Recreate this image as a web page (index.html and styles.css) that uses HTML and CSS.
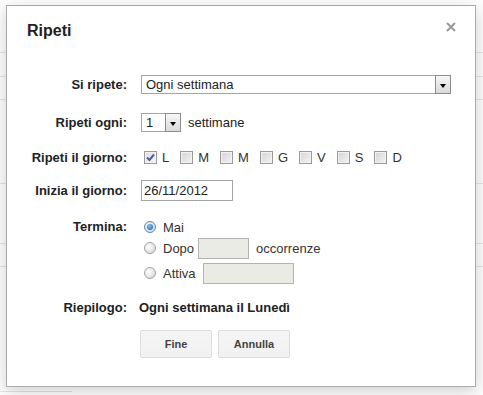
FILE: index.html
```html
<!DOCTYPE html>
<html lang="it">
<head>
  <meta charset="UTF-8">
  <meta name="viewport" content="width=device-width, initial-scale=1.0">
  <title>Ripeti</title>
  <link rel="stylesheet" href="styles.css">
</head>
<body>
  <!-- calendar grid showing behind the dialog -->
  <div class="backdrop">
    <div class="bg-row h52"></div>
    <div class="bg-row h25"></div>
    <div class="bg-row h23"></div>
    <div class="bg-row h84"></div>
    <div class="bg-row h60"></div>
    <div class="bg-row h23"></div>
    <div class="bg-row h125 short"></div>
  </div>

  <div class="dialog">
    <div class="dialog-header">
      <h2>Ripeti</h2>
      <span class="close">
        <svg width="10" height="10" viewBox="0 0 10 10">
          <path d="M1 1 L9 9 M9 1 L1 9" stroke="#999" stroke-width="2" fill="none"/>
        </svg>
      </span>
    </div>

    <form class="repeat-form">
      <div class="row r1">
        <label class="row-label">Si ripete:</label>
        <div class="fake-select wide">
          <span class="sel-text">Ogni settimana</span>
          <span class="sel-btn"><i></i></span>
        </div>
      </div>

      <div class="row r2">
        <label class="row-label">Ripeti ogni:</label>
        <div class="fake-select small">
          <span class="sel-text">1</span>
          <span class="sel-btn"><i></i></span>
        </div>
        <span class="after">settimane</span>
      </div>

      <div class="row r3">
        <label class="row-label">Ripeti il giorno:</label>
        <div class="days">
          <span class="day"><span class="box checked"><svg width="11" height="11" viewBox="0 0 11 11"><path d="M2 5.5 L4.5 8 L9 2.5" stroke="#4b5da6" stroke-width="2" fill="none"/></svg></span>L</span>
          <span class="day"><span class="box"></span>M</span>
          <span class="day"><span class="box"></span>M</span>
          <span class="day"><span class="box"></span>G</span>
          <span class="day"><span class="box"></span>V</span>
          <span class="day"><span class="box"></span>S</span>
          <span class="day"><span class="box"></span>D</span>
        </div>
      </div>

      <div class="row r4">
        <label class="row-label">Inizia il giorno:</label>
        <div class="text-input date">26/11/2012</div>
      </div>

      <div class="row r5">
        <label class="row-label">Termina:</label>
        <div class="ends">
          <div class="end-line first"><span class="radio on"></span>Mai</div>
          <div class="end-line"><span class="radio"></span>Dopo<span class="text-input off count"></span><span class="after">occorrenze</span></div>
          <div class="end-line"><span class="radio"></span>Attiva<span class="text-input off until"></span></div>
        </div>
      </div>

      <div class="row r6">
        <label class="row-label">Riepilogo:</label>
        <span class="summary">Ogni settimana il Lunedì</span>
      </div>

      <div class="row r7">
        <span class="row-label"></span>
        <div class="buttons">
          <button type="button" class="btn first-btn">Fine</button>
          <button type="button" class="btn">Annulla</button>
        </div>
      </div>
    </form>
  </div>
</body>
</html>
```

FILE: styles.css
```css
body {
    margin: 0;
    font-family: "Liberation Sans", Arial, sans-serif;
    font-size: 13px;
    color: #222;
    background-color: #ffffff;
    width: 483px;
    height: 395px;
    overflow: hidden;
    position: relative;
}

.backdrop {
    width: 483px;
}

.bg-row {
    border-bottom: 1px solid #e6e6e6;
    box-sizing: border-box;
}

.h52 { height: 53px; }
.h25 { height: 24px; }
.h23 { height: 23px; }
.h84 { height: 84px; }
.h60 { height: 60px; }
.h125 { height: 125px; }

.short {
    width: 72px;
}

.dialog {
    position: absolute;
    left: 6px;
    top: 5px;
    width: 468px;
    height: 380px;
    background-color: #ffffff;
    border: 1px solid #acacac;
    box-shadow: 0 4px 16px rgba(0, 0, 0, 0.2);
}

.dialog-header {
    display: flex;
    justify-content: space-between;
    align-items: flex-start;
    padding: 15px 19px 0 20px;
}

.dialog-header h2 {
    margin: 0;
    font-size: 16px;
    line-height: 20px;
    font-weight: bold;
    color: #222;
}

.close {
    display: block;
    width: 10px;
    height: 10px;
    margin-top: 1px;
}

.close svg {
    display: block;
}

.repeat-form {
    padding-top: 32px;
}

.row {
    display: flex;
    align-items: center;
    height: 23px;
}

.row-label {
    width: 120px;
    margin-right: 14px;
    text-align: right;
    font-weight: bold;
    flex-shrink: 0;
}

.r1 { margin-top: 0; }
.r2 { margin-top: 15px; }
.r3 { margin-top: 12px; height: 22px; }
.r4 { margin-top: 11px; }
.r5 { margin-top: 15px; height: auto; align-items: flex-start; }
.r5 .row-label { line-height: 20px; }
.r6 { margin-top: 13px; height: 21px; }
.r7 { margin-top: 12px; height: 28px; }

.fake-select {
    display: flex;
    align-items: stretch;
    height: 19px;
    box-sizing: border-box;
    border: 1px solid #a5a5a5;
    border-right: none;
    background-color: #fff;
}

.fake-select.wide { width: 310px; }
.fake-select.small { width: 40px; }

.sel-text {
    flex: 1;
    padding-left: 4px;
    line-height: 17px;
}

.sel-btn {
    width: 14px;
    margin-top: -1px;
    margin-bottom: -1px;
    border: 1px solid #8c8c8c;
    background: linear-gradient(#f7f7f7, #d9d9d9);
    display: flex;
    align-items: center;
    justify-content: center;
}

.sel-btn i {
    display: block;
    width: 0;
    height: 0;
    margin-top: 2px;
    border-left: 3.5px solid transparent;
    border-right: 3.5px solid transparent;
    border-top: 4px solid #000;
}

.after {
    margin-left: 7px;
}

.days {
    display: flex;
    align-items: center;
}

.day {
    display: flex;
    align-items: center;
    margin-right: 8px;
    color: #333;
}

.box {
    width: 13px;
    height: 13px;
    box-sizing: border-box;
    margin: 0 5px 0 3px;
    border: 1px solid #9a9a9a;
    background: linear-gradient(135deg, #d4d4d4, #f4f4f4);
    box-shadow: inset 0 0 0 1px #f2f2f2;
    display: flex;
    align-items: center;
    justify-content: center;
}

.box.checked {
    background: linear-gradient(135deg, #dcdcdc, #f8f8f8);
}

.box svg {
    display: block;
}

.text-input {
    box-sizing: border-box;
    height: 21px;
    border: 1px solid #a4a4a4;
    background-color: #fff;
    line-height: 19px;
    padding-left: 2px;
}

.text-input.date {
    width: 92px;
}

.text-input.off {
    background-color: #ebebe6;
    border-color: #b3b3b3;
}

.count {
    width: 51px;
    margin-left: 4px;
}

.until {
    width: 91px;
    margin-left: 7px;
}

.ends {
    display: flex;
    flex-direction: column;
}

.end-line {
    display: flex;
    align-items: center;
    height: 22px;
    color: #333;
}

.end-line.first {
    height: 20px;
    margin-bottom: 0;
}

.end-line + .end-line {
    margin-top: 3px;
}

.end-line.first + .end-line {
    margin-top: 0;
}

.radio {
    width: 12px;
    height: 12px;
    box-sizing: border-box;
    margin: 0 7px 0 3px;
    border-radius: 50%;
    border: 1px solid #a2a2a2;
    background: radial-gradient(circle at 35% 35%, #ffffff, #d2d2d2);
    display: flex;
    align-items: center;
    justify-content: center;
}

.radio.on {
    border-color: #6d86a6;
    background: radial-gradient(circle at 40% 40%, #f4f8fc, #c3d3e4);
}

.radio.on::after {
    content: "";
    width: 6px;
    height: 6px;
    border-radius: 50%;
    background: radial-gradient(circle at 40% 35%, #7fc5f4, #1a5a9c);
}

.summary {
    font-weight: bold;
    margin-left: -2px;
}

.buttons {
    display: flex;
    gap: 6px;
    margin-left: -1px;
}

.btn {
    width: 72px;
    height: 28px;
    padding: 0;
    font-family: "Liberation Sans", Arial, sans-serif;
    font-size: 11px;
    font-weight: bold;
    color: #444;
    background: linear-gradient(#f5f5f5, #f1f1f1);
    border: 1px solid #dcdcdc;
    border-radius: 2px;
    cursor: pointer;
}
```
